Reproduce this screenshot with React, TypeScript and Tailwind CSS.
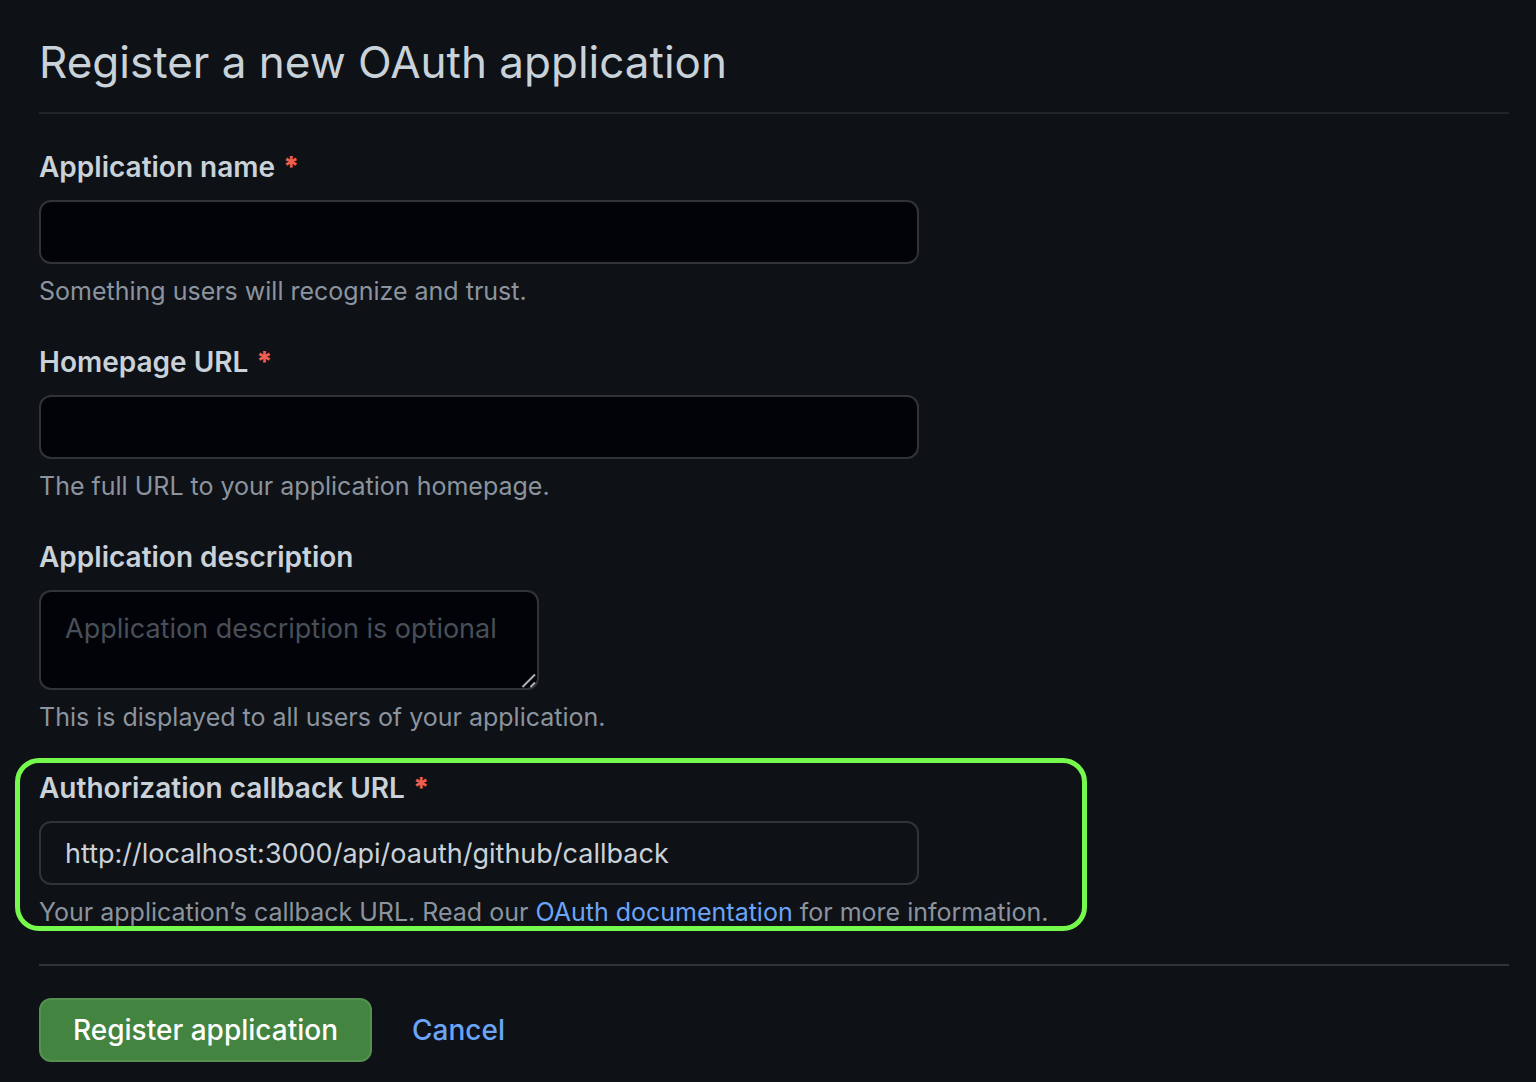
import React from 'react';

type FieldProps = {
  id: string;
  label: string;
  required?: boolean;
  note: React.ReactNode;
  children: React.ReactNode;
};

const inputStyles =
  'block h-16 w-full max-w-[880px] rounded-xl border-2 border-[#303338] px-6 text-[27px] text-[#c9d1d9] outline-none focus:border-[#6ba4f8]';

const Field = ({ id, label, required, note, children }: FieldProps) => (
  <div>
    <label htmlFor={id} className="mb-3 block text-[28px] leading-[42px] font-semibold">
      {label}
      {required && <span className="ml-2 font-extrabold text-[#ee5f4f]">*</span>}
    </label>
    {children}
    <p className="mt-2 text-[25px] leading-[39px] text-[#8b949e]">{note}</p>
  </div>
);

const App = () => {
  return (
    <main className="min-h-screen bg-[#0e1116] pt-[26px] pr-[27px] pb-5 pl-[39px] font-['Inter',sans-serif] text-[#c9d1d9]">
      <h1 className="border-b-2 border-[#212429] pb-[14px] text-[44px] leading-[72px]">
        Register a new OAuth application
      </h1>

      <form className="mt-8" onSubmit={(e) => e.preventDefault()}>
        <div className="flex flex-col gap-[30px]">
          <Field id="app-name" label="Application name" required note="Something users will recognize and trust.">
            <input id="app-name" type="text" className={`${inputStyles} bg-[#020308]`} />
          </Field>

          <Field id="homepage" label="Homepage URL" required note="The full URL to your application homepage.">
            <input id="homepage" type="text" className={`${inputStyles} bg-[#020308]`} />
          </Field>

          <Field id="description" label="Application description" note="This is displayed to all users of your application.">
            <div className="relative w-full max-w-[500px]">
              <textarea
                id="description"
                placeholder="Application description is optional"
                className="block h-[100px] w-full resize-none overflow-hidden rounded-xl border-2 border-[#303338] bg-[#020308] px-6 py-4 text-[27px] leading-[42px] outline-none placeholder:text-[#484f58] focus:border-[#6ba4f8]"
              />
              {/* Resize grip */}
              <svg
                className="pointer-events-none absolute right-[3px] bottom-[2px] h-[15px] w-[15px]"
                viewBox="0 0 15 15"
                stroke="#b0b0b0"
                strokeWidth="2"
                aria-hidden="true"
              >
                <path d="M1.5 14 14 1.5M9.5 14 14 9.5" />
              </svg>
            </div>
          </Field>

          {/* Highlighted field */}
          <div className="relative w-full max-w-[1048px]">
            <Field
              id="callback"
              label="Authorization callback URL"
              required
              note={
                <>
                  Your application’s callback URL. Read our{' '}
                  <a href="#" className="text-[#6ba4f8]">OAuth documentation</a> for more information.
                </>
              }
            >
              <input
                id="callback"
                type="text"
                defaultValue="http://localhost:3000/api/oauth/github/callback"
                className={`${inputStyles} bg-[#0e1116]`}
              />
            </Field>
            <div className="pointer-events-none absolute -top-[9px] right-0 bottom-px -left-6 rounded-3xl border-5 border-[#75f94c]" />
          </div>
        </div>

        <div className="mt-8 flex items-center gap-10 border-t-2 border-[#303338] pt-8">
          <button
            type="submit"
            className="h-16 rounded-xl border-2 border-[#539150] bg-[#438440] px-8 text-[28px] font-medium text-white"
          >
            Register application
          </button>
          <a href="#" className="text-[28px] font-medium text-[#6ba4f8]">Cancel</a>
        </div>
      </form>
    </main>
  );
};

export default App;
